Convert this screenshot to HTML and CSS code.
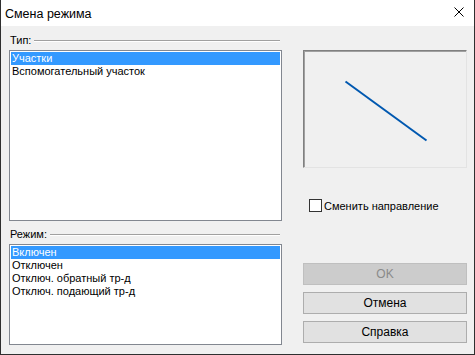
FILE: index.html
```html
<!DOCTYPE html>
<html lang="ru">

<head>
    <meta charset="UTF-8">
    <title>Смена режима</title>
    <link rel="stylesheet" href="styles.css">
</head>

<body>
    <div class="window">
        <div class="titlebar">
            <span class="title">Смена режима</span>
            <svg class="close" width="10" height="10" viewBox="0 0 10 10">
                <path d="M0.5 0.5 L9.5 9.5 M9.5 0.5 L0.5 9.5" stroke="#000" stroke-width="1" fill="none"/>
            </svg>
        </div>
        <div class="content">
            <div class="left">
                <div class="group-head"><span>Тип:</span><div class="rule"></div></div>
                <ul class="listbox list-type">
                    <li class="selected">Участки</li>
                    <li>Вспомогательный участок</li>
                </ul>
                <div class="group-head head-mode"><span>Режим:</span><div class="rule"></div></div>
                <ul class="listbox list-mode">
                    <li class="selected">Включен</li>
                    <li>Отключен</li>
                    <li>Отключ. обратный тр-д</li>
                    <li>Отключ. подающий тр-д</li>
                </ul>
            </div>
            <div class="right">
                <div class="preview">
                    <svg width="162" height="116" viewBox="0 0 162 116">
                        <line x1="41.5" y1="30.5" x2="122.5" y2="89.5" stroke="#0058b0" stroke-width="2"/>
                    </svg>
                </div>
                <label class="check">
                    <span class="box"></span>
                    <span>Сменить направление</span>
                </label>
                <div class="buttons">
                    <button class="btn" disabled>OK</button>
                    <button class="btn">Отмена</button>
                    <button class="btn">Справка</button>
                </div>
            </div>
        </div>
    </div>
</body>

</html>
```

FILE: styles.css
```css
body {
    margin: 0;
    font-family: 'Liberation Sans', Arial, sans-serif;
    font-size: 11px;
    color: #000;
    background-color: #f0f0f0;
}

.window {
    width: 475px;
    height: 355px;
    box-sizing: border-box;
    border: 1px solid #2f2f2f;
    border-top: none;
    background-color: #f0f0f0;
    display: flex;
    flex-direction: column;
}

.titlebar {
    height: 26px;
    background-color: #fff;
    display: flex;
    align-items: center;
    justify-content: space-between;
    padding: 0 10px 0 4px;
    flex-shrink: 0;
}

.title {
    font-size: 12.5px;
    margin-top: 1px;
}

.close {
    display: block;
    margin-top: -3px;
}

.content {
    display: flex;
    padding: 7px 7px 0 8px;
    gap: 21px;
}

.left {
    width: 273px;
    display: flex;
    flex-direction: column;
}

.group-head {
    height: 14px;
    display: flex;
    align-items: center;
    gap: 3px;
    padding-left: 1px;
}

.group-head .rule {
    flex: 1;
    height: 0;
    border-top: 1px solid #a0a0a0;
    border-bottom: 1px solid #fff;
    margin-right: 2px;
    margin-top: 1px;
}

.head-mode {
    margin-top: 6px;
}

.listbox {
    list-style: none;
    margin: 3px 0 0 0;
    padding: 1px;
    box-sizing: border-box;
    border: 1px solid #828790;
    background-color: #fff;
}

.list-type {
    height: 171px;
}

.list-mode {
    height: 101px;
}

.listbox li {
    height: 13px;
    line-height: 13px;
    padding-left: 1px;
    white-space: nowrap;
}

.listbox li.selected {
    background-color: #3399ff;
    color: #fff;
}

.right {
    width: 164px;
    display: flex;
    flex-direction: column;
}

.preview {
    margin-top: 17px;
    height: 118px;
    box-sizing: border-box;
    border-top: 1px solid #808080;
    border-left: 1px solid #808080;
    border-right: 1px solid #e3e3e3;
    border-bottom: 1px solid #e3e3e3;
    box-shadow: inset 1px 1px 0 #a0a0a0;
    background-color: #f0f0f0;
}

.preview svg {
    display: block;
}

.check {
    margin-top: 31px;
    margin-left: 6px;
    display: flex;
    align-items: center;
    gap: 2px;
    height: 13px;
}

.check .box {
    width: 13px;
    height: 13px;
    box-sizing: border-box;
    border: 1px solid #333;
    background-color: #fff;
}

.buttons {
    margin-top: 51px;
    display: flex;
    flex-direction: column;
    gap: 7px;
}

.btn {
    height: 22px;
    margin: 0;
    padding: 0;
    font-family: 'Liberation Sans', Arial, sans-serif;
    font-size: 12px;
    color: #000;
    background-color: #e1e1e1;
    border: 1px solid #adadad;
}

.btn:disabled {
    background-color: #cccccc;
    border-color: #bfbfbf;
    color: #8a8a8a;
}
```
